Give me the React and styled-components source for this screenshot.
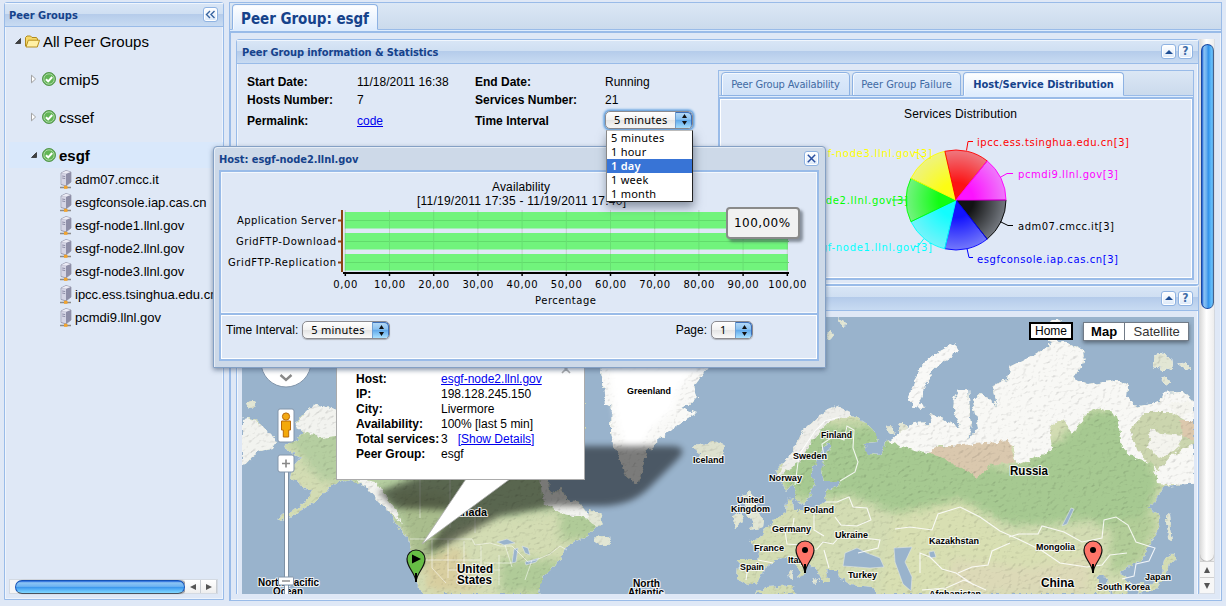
import React from "react";
import styled, { createGlobalStyle, css } from "styled-components";

const Global = createGlobalStyle`
  *, *::before, *::after { box-sizing: border-box; }
  body { margin: 0; background: #dfe8f6; color: #000; font: 12px/15px "Liberation Sans", Arial, sans-serif; overflow: hidden; }
`;
const line = "#99bbe8";
const tahoma = '"DejaVu Sans Condensed", "DejaVu Sans", sans-serif';
const lucida = '"Noto Sans", "Open Sans", sans-serif';

const Page = styled.div`
  position: relative; width: 1226px; height: 606px; padding: 2px 5px 5px 4px;
  display: flex; gap: 5px; align-items: flex-start; overflow: hidden;
`;
const headerFill = css`
  background: linear-gradient(#d9e6f6 0, #cfdff2 46%, #b4cbea 47%, #c8dbf2 100%);
`;
const Sidebar = styled.aside`
  width: 220px; height: 598px; border: 1px solid ${line}; box-shadow: inset 0 0 0 1px #eef4fc;
  display: flex; flex-direction: column; flex: none; border-radius: 3px 3px 0 0;
`;
const Header = styled.header`
  ${headerFill}
  height: ${(p) => p.$h || 24}px; flex: none; display: flex; align-items: center; gap: 2px;
  padding: 0 ${(p) => p.$right ?? 5}px 0 ${(p) => p.$left ?? 5}px;
  border-bottom: 1px solid ${line}; box-shadow: inset 0 1px #f0f6fd;
`;
const Title = styled.h2`
  margin: 0 auto 0 0; padding-top: 2px; font: bold 11px/14px ${tahoma}; color: #15428b; letter-spacing: ${(p) => p.$ls || 0}px; white-space: nowrap;
`;
const Tool = styled.button`
  width: 15px; height: 15px; padding: 0; border: 1px solid #8fb3e2; border-radius: 3px;
  background: linear-gradient(#fff, #dce9f9); display: grid; place-items: center;
  font: bold 12px/13px ${tahoma}; color: #3d6ba6; box-shadow: inset 0 0 0 1px #fff;
`;
const Tree = styled.div` flex: 1; padding-top: 1px; overflow: hidden; `;
const Node = styled.div`
  height: ${(p) => p.$h || 38}px; display: flex; align-items: center; padding-left: ${(p) => p.$indent}px;
  font-size: ${(p) => p.$size || 15}px; font-weight: ${(p) => (p.$bold ? 700 : 400)}; white-space: nowrap;
  margin: 0 0 0 4px; background: ${(p) => (p.$on ? "#d9e8fb" : "none")};
  svg { flex: none; }
`;
const Gap = styled.span` width: ${(p) => p.$w}px; flex: none; `;
const Rise = styled.div` height: ${(p) => p.$h}px; `;
const HScroll = styled.div`
  height: 15px; margin: 0 5px 5px 4px; display: flex; border: 1px solid #d4dae2; background: #f4f5f7; flex: none;
`;
const HThumb = styled.div`
  width: 170px; height: 14px; margin-left: 5px; border-radius: 7px; border: 1px solid #1553b8; border-bottom-color: #49525e;
  background: linear-gradient(#1d60d8 0, #8cc4f4 15%, #6db3f2 45%, #3b96ec 52%, #67c1fb 82%, #7fd7ff 100%);
  box-shadow: 2px 0 1px #999;
`;
const ScrollArrow = styled.div`
  width: 16px; display: grid; place-items: center; border-right: 1px solid #c8ccd2; background: linear-gradient(#fff, #eee);
`;

const Main = styled.main`
  width: 993px; height: 599px; border: 1px solid ${line}; box-shadow: inset 0 0 0 1px #eef4fc; display: flex; flex-direction: column; flex: none;
`;
const TabStrip = styled.div`
  height: ${(p) => p.$h}px; flex: none; padding: 1px 2px 0; display: flex; gap: 2px;
  background: linear-gradient(#dbe7f5, #cbdaec); border-bottom: 1px solid ${line};
`;
const TabBand = styled.div` height: 3px; flex: none; background: #deecfd; border-bottom: 2px solid ${line}; `;
const Tab = styled.div`
  width: ${(p) => p.$w}px; height: calc(100% + 1px); border: 1px solid #8db2e3; border-radius: 4px 4px 0 0; display: flex; align-items: center;
  justify-content: center; white-space: nowrap; color: ${(p) => (p.$on ? "#15428b" : "#416aa3")};
  border-bottom-color: ${(p) => (p.$on ? "#deecfd" : "#8db2e3")};
  background: ${(p) => (p.$on ? "linear-gradient(#fff, #deecfd)" : "linear-gradient(#deebfb, #d0e1f7)")};
  box-shadow: inset 1px 1px #f5f9fe; padding-top: ${(p) => p.$pt || 0}px;
  font: ${(p) => (p.$on ? "bold" : "normal")} ${(p) => p.$size || 11}px/18px ${tahoma}; letter-spacing: ${(p) => p.$ls || 0}px;
`;
const Body = styled.div`
  flex: 1; min-height: 0; border-left: 1px solid ${line}; display: flex; padding: 6px 5px 4px 5px;
`;
const Column = styled.div` width: 963px; height: 555px; overflow: hidden; flex: none; `;
const Panel = styled.section`
  height: ${(p) => p.$h}px; border: 1px solid ${line}; box-shadow: inset 1px 0 #f2f7fd, inset -1px -1px #f2f7fd; border-radius: 3px 3px 0 0;
`;
const InfoBody = styled.div` display: flex; justify-content: space-between; padding: 6px 4px 0 10px; `;
const Facts = styled.div`
  display: grid; grid-template-columns: 110px 118px 130px 100px; grid-template-rows: 18px 18px 25px; align-items: center; margin-top: 3px;
  font-size: 12px; align-content: start;
`;
const B = styled.b` white-space: nowrap; `;
const Link = styled.a` color: #0000ee; text-decoration: underline; white-space: nowrap; `;
const Select = styled.span`
  width: ${(p) => p.$w}px; height: 18px; display: inline-flex; border: 1px solid #8b8b90; border-radius: 5px; overflow: hidden;
  background: linear-gradient(#fff, #f1f1f1 50%, #e4e4e4 51%, #fafafa); font: 11px/16px ${lucida}; letter-spacing: .25px;
  margin-top: ${(p) => (p.$focus ? -4 : 0)}px;
  box-shadow: ${(p) => (p.$focus ? "0 0 0 1px #76a9dd, 0 0 2px 2px #7fb2e6" : "0 1px 1px #aab0b8")};
`;
const SelectText = styled.span` flex: 1; padding-left: ${(p) => p.$pl || 8}px; white-space: nowrap; `;
const Stepper = styled.span`
  width: 17px; display: grid; place-items: center; border-left: 1px solid #6f9fd2; border-radius: 0 4px 4px 0;
  background: linear-gradient(#b9dcf7, #8bc2f1 45%, #62aaea 52%, #a9e1ff); box-shadow: inset -1px 1px #3e6fb9;
`;
const ChartBox = styled.div`
  width: 476px; height: 210px; border: 1px solid ${line}; display: flex; flex-direction: column;
`;
const ChartInner = styled.div` flex: 1; min-height: 0; overflow: hidden; border: 1px solid ${line}; border-top: 0; box-shadow: inset 0 0 0 1px #fff; `;
const VScroll = styled.div`
  width: 16px; height: 555px; display: flex; flex-direction: column; align-items: center; border: 1px solid #d8dde5; border-top: 0;
  background: linear-gradient(90deg, #dadada, #fff 45%, #ededed);
`;
const VThumb = styled.div`
  width: 13px; height: 265px; margin-top: 5px; border-radius: 7px; border: 1px solid #1747a2; border-right-color: #44618c; flex: none;
  background: linear-gradient(90deg, #1b59cf 0, #8cc4f4 18%, #5fa9ee 46%, #2f8fe8 55%, #60bcfa 85%, #5cabe8 100%);
`;
const VTrack = styled.div` flex: 1; width: 14px; border-radius: 0 0 8px 8px; box-shadow: 0 1px 1px #aaa; `;
const VArrow = styled.div` height: 16px; width: 14px; display: grid; place-items: center; border-top: 1px solid #d0d0d0; flex: none; background: #f7f7f7; `;
const MapArea = styled.div` position: relative; width: 952px; height: 277px; margin: 6px 0 0 5px; overflow: hidden; background: #99b3cc; > svg { display: block; } `;
const Popup = styled.div`
  position: absolute; left: 94px; top: -20px; width: 249px; height: 183px; background: #fff; border: 1px solid #ababab; padding: 74px 0 0 19px;
  display: grid; grid-template-columns: 85px 1fr; grid-auto-rows: 15px; align-content: start; font-size: 12px;
`;
const PopupClose = styled.svg` position: absolute; left: 224px; top: 68px; `;
const HomeBtn = styled.div`
  position: absolute; left: 787px; top: 5px; width: 44px; height: 18px; border: 2px solid #000; background: #fff; font-size: 12px; line-height: 14px; text-align: center;
`;
const TypeGroup = styled.div`
  position: absolute; left: 841px; top: 5px; width: 106px; height: 19px; display: flex; border: 1px solid #717b87; background: #fff; box-shadow: 0 2px 4px rgba(0,0,0,.4);
`;
const TypeBtn = styled.div`
  width: ${(p) => p.$w}px; text-align: center; font-size: 13px; line-height: 17px; font-weight: ${(p) => (p.$on ? 700 : 400)}; color: ${(p) => (p.$on ? "#000" : "#333")};
  & + & { border-left: 1px solid #717b87; }
`;
const Dialog = styled.section`
  position: absolute; left: 213px; top: 146px; width: 613px; height: 222px; padding: 0 6px 6px 5px; background: #cdd9e8; border: 1px solid #84a0c4;
  border-radius: 4px 4px 1px 1px; box-shadow: inset 1px 1px #e6edf6, 0 2px 5px rgba(70,90,120,.65); display: flex; flex-direction: column;
`;
const DialogHead = styled.header` height: 23px; flex: none; display: flex; align-items: center; padding: 0; `;
const DialogChart = styled.div` height: 144px; flex: none; border: 1px solid ${line}; border-width: 2px 2px 1px; box-shadow: inset 0 0 0 1px #f4f8fd; background: #dfe8f6; > svg { display: block; } `;
const DialogFoot = styled.footer`
  flex: 1; border: 1px solid ${line}; border-width: 1px 2px 2px; background: #dfe8f6; box-shadow: inset 0 0 0 1px #fff; display: flex; align-items: flex-start; padding: 6px 64px 0 5px;
`;
const FootLabel = styled.span` line-height: 18px; margin-right: ${(p) => p.$mr}px; `;
const Spacer = styled.span` flex: 1; `;
const Tip = styled.div`
  position: absolute; left: 726px; top: 207px; width: 74px; height: 32px; border: 2px solid #8a8a8a; border-radius: 4px; background: #f1f1f1;
  box-shadow: 3px 3px 3px rgba(60,70,80,.55); font: 12px/28px "DejaVu Sans", sans-serif; padding-left: 6px; letter-spacing: .45px;
`;
const Menu = styled.div`
  position: absolute; left: 606px; top: 130px; width: 87px; height: 72px; background: #fff; border: 1px solid #222; border-top-color: #bbb; border-left-color: #888;
  box-shadow: 1px 5px 9px rgba(50,60,80,.5); font: 11px/14px ${lucida}; letter-spacing: .25px;
`;
const Option = styled.div` height: 14px; padding-left: 4px; ${(p) => p.$on && css`background: #3874d6; color: #fff; font-weight: 600;`} `;

const Folder = () => (
  <svg width="15" height="13" viewBox="0 0 15 13"><path d="M.5 11V2.5L2 1h3.5L7 2.5h4.5L12.5 4v7z" fill="#f5d86a" stroke="#b08a1d" /><path d="M3.3 5.2h11.2L12.3 12H1z" fill="#fff0a5" stroke="#b8901e" /></svg>
);
const Check = () => (
  <svg width="14" height="14" viewBox="0 0 14 14"><circle cx="7" cy="7" r="6.5" fill="#55a64b" stroke="#57984f" /><circle cx="7" cy="7" r="5.2" fill="#62b556" stroke="#b6dcae" strokeWidth=".9" /><path d="M4 7.2l2.2 2.2L10.2 5" fill="none" stroke="#fff" strokeWidth="2" /></svg>
);
const Server = () => (
  <svg width="13" height="19" viewBox="0 0 13 19">
    <path d="M2 3L7 .5 12 2v10l-5 4-5-1.500z" fill="#a8a8bd" stroke="#838398" strokeWidth=".6" />
    <path d="M2.300 3.200L7 4v11.500L2.300 14z" fill="#d5d5e5" /><path d="M7 4l5-2v10l-5 3.500z" fill="#8e8ea7" /><path d="M2.500 3L7 .8 11.700 2 7 3.800z" fill="#ececf6" />
    <path d="M3.200 6l3 .6M3.200 8l3 .6" stroke="#7d7d99" strokeWidth=".8" />
    <path d="M1 17.500h11" stroke="#8b8b8b" strokeWidth="1.500" /><path d="M6.500 15.500v2" stroke="#d89028" strokeWidth="1.500" /><rect x="5" y="16" width="3.500" height="2.800" fill="#f2a42e" />
  </svg>
);
const Twisty = ({ open }) => (
  <svg width="8" height="10" viewBox="0 0 8 10">{open ? <path d="M6.500 2.500v5h-5z" fill="#404040" stroke="#222" strokeWidth=".7" /> : <path d="M1.500 1.200v7.600L5.600 5z" fill="#fff" stroke="#999" strokeWidth=".9" />}</svg>
);
const Tri = ({ d, fill = "#555" }) => <svg width="8" height="8" viewBox="0 0 8 8"><path d={d} fill={fill} /></svg>;
const UP = "M4 1L7 7H1z", DOWN = "M1 1h6L4 7z", LEFT = "M1 4l6-3v6z", RIGHT = "M1 1l6 3-6 3z";
const UpDown = () => <svg width="7" height="11" viewBox="0 0 7 11"><path d="M3.500 0L6 4H1zM1 7h5L3.500 11z" fill="#111" /></svg>;
const CollapseTool = () => <Tool><Tri d="M4 2l4 4H0z" fill="#1e4e94" /></Tool>;

function MacSelect({ w, text, focus, pl }) {
  return <Select $w={w} $focus={focus}><SelectText $pl={pl}>{text}</SelectText><Stepper><UpDown /></Stepper></Select>;
}

const slices = ["#000000", "#0000ff", "#00ffff", "#00ff00", "#ffff00", "#ff0000", "#ff00ff"];
const pieLabels = [
  ["ipcc.ess.tsinghua.edu.cn[3]", 977, 146, 152, "#f00", "start"],
  ["pcmdi9.llnl.gov[3]", 1018, 178, 100, "#f0f", "start"],
  ["adm07.cmcc.it[3]", 1018, 230, 96, "#000", "start"],
  ["esgfconsole.iap.cas.cn[3]", 977, 263, 141, "#00f", "start"],
  ["esgf-node3.llnl.gov[3]", 932, 157, 124, "#ff0", "end"],
  ["esgf-node2.llnl.gov[3]", 908, 204, 124, "#0f0", "end"],
  ["esgf-node1.llnl.gov[3]", 932, 251, 124, "#0ff", "end"],
];
const leaders = [
  ["M966.500 151l1.500-9h5", "#f00"], ["M1000 178l7-4h6", "#f0f"], ["M1000 222l8 4h5", "#000"], ["M967 249l2 9h4", "#00f"],
  ["M924 160l-6-7h-4", "#ff0"], ["M906 200.500h-14", "#0f0"], ["M924 239l-6 8h-4", "#0ff"],
];
function Pie() {
  const cx = 956, cy = 200.500, r = 50;
  return (
    <svg width="468" height="176" viewBox="720 99.500 468 176" fontFamily="DejaVu Sans, sans-serif" fontSize="10" display="block">
      <defs>{slices.map((c, i) => (
        <radialGradient key={c} id={`pie${i}`} gradientUnits="userSpaceOnUse" cx={cx} cy={cy} r={r}>
          <stop offset=".35" stopColor={c} stopOpacity=".92" /><stop offset="1" stopColor={c} stopOpacity=".48" />
        </radialGradient>
      ))}</defs>
      <text x="904" y="118.500" fontFamily="Liberation Sans, sans-serif" fontSize="12" textLength="113">Services Distribution</text>
      {slices.map((c, i) => {
        const a = (i * 2 * Math.PI) / 7, b = ((i + 1) * 2 * Math.PI) / 7;
        return <path key={c} d={`M${cx} ${cy}L${cx + r * Math.cos(a)} ${cy + r * Math.sin(a)}A${r} ${r} 0 0 1 ${cx + r * Math.cos(b)} ${cy + r * Math.sin(b)}Z`} fill={`url(#pie${i})`} stroke={c} strokeWidth=".9" />;
      })}
      {leaders.map(([d, c]) => <path key={c} d={d} stroke={c} fill="none" />)}
      {pieLabels.map(([t, x, y, w, c, anchor]) => <text key={t} x={x} y={y + 0.500} textLength={w} fill={c} textAnchor={anchor}>{t}</text>)}
    </svg>
  );
}

function BarChart() {
  const ticks = Array.from({ length: 11 }, (_, i) => 345.300 + i * 44.200);
  const bars = [["Application Server", 212, 99], ["GridFTP-Download", 233, 100], ["GridFTP-Replication", 254, 108]];
  return (
    <svg width="596" height="140" viewBox="221 172 596 140" fontFamily="DejaVu Sans, sans-serif" fontSize="10">
      <g fontFamily="Liberation Sans, sans-serif" fontSize="12">
        <text x="492" y="191" textLength="58">Availability</text>
        <text x="417" y="205" textLength="209">[11/19/2011 17:35 - 11/19/2011 17:40]</text>
      </g>
      {ticks.map((x) => <path key={x} d={`M${x} 210v62`} stroke="#cbcbd0" />)}
      {bars.map(([t, y, w]) => (
        <g key={t}>
          <rect x="345.300" y={y} width="442" height="16.500" fill="#71f47c" />
          <path d={`M345 ${y + 8.500}h444`} stroke="#62dc6c" /><path d={`M338 ${y + 8.500}h4`} stroke="#8b4513" strokeWidth="2" />
          <text x="336" y={y + 12} textAnchor="end" textLength={w}>{t}</text>
        </g>
      ))}
      {ticks.map((x) => [212, 233, 254].map((y) => <path key={`${x}${y}`} d={`M${x} ${y}v16.500`} stroke="#69df73" />))}
      <path d="M342 210v62" stroke="#8b4513" strokeWidth="2" />
      <path d="M343 273h446" stroke="#000" strokeWidth="2" />
      {ticks.map((x, i) => (
        <g key={x}><path d={`M${x} 273v3`} stroke="#000" strokeWidth="1.500" />
          <text x={x} y="288" textAnchor="middle" textLength={i === 0 ? 24 : i === 10 ? 38 : 31}>{`${i * 10},00`}</text></g>
      ))}
      <text x="535" y="304" textLength="61">Percentage</text>
    </svg>
  );
}

const land = {
  america: "M277 518L292 512 304 504 312 491 300 485 290 478 292 468 300 458 288 452 284 445 297 440 302 432 296 422 305 412 316 405 331 408 345 412V400H584V470L540 482 541 500 538 520 533 526 531 514 518 507 504 500 497 490 502 480H545L552 494 560 486 566 500 580 503 590 516 597 527 588 536 575 541 567 547 560 560 552 567 542 578 539 594H421L415 580 411 565 410 552 408 538 400 530 393 518 385 507 376 499 366 487 352 480 338 482 329 487 322 496 310 505 297 513 282 521Z",
  siberia: "M242 419L250 418 259 422 264 429 272 434 277 442 272 449 260 451 252 456 242 467Z",
  bits: "M246 404l4-3 6 2-3 4-5 1zM590 509l10 5 4 10-7 3-8-6zM594 540l8-6 9 7-5 5-10-2zM733 517l9-4 2 10-9 4zM742 496l10-5 3 8 4 10-4 2 10 9-1 7-14 3 3-8-4-6zM788 572l4-2 1 10-4-1zM812 578l7 1-4 4zM697 335l2-3zM826 334l5-4 3 5-4 5zM838 317l9 8-5 1zM898 425l5-3 4 5-5 6-4-3zM887 427l5-1 2 9-5-2zM1153 356l8-2 5 3 6 2 1 9-8 2-12-3zM1178 364l7-2 6 6-5 2zM1161 379l7-2 3 6-6 2zM1167 513l3 1 1 15 2 12-5-2zM1165 559l8-5 4 4-8 6-3 12-10 13-8 4-5-3 10-6 8-7zM1136 584l7-1 2 7-6 4zM1044 337l6-18h9l4 15-9 8z",
  greenland: "M600 366L603 382 605 404 612 407 611 430 613 444 620 457 624 474 637 484 643 467 646 452 661 439 674 427 698 413 680 408 698 398 694 386 709 366Z",
  iceland: "M693 448l4-4 6 2 6-2 6-3 7 4 2 8-3 6-9 4-9-2-7-3 5-3z",
  novaya: "M955 343L959 350 943 361 931 373 924 388 920 400 926 409 915 408 909 398 914 383 920 367 933 355 946 348Z",
  eurasia: "M778 478L775 472 790 455 797 443 803 430 817 417 828 410 838 406 850 412 867 425 878 435 877 442 863 443 868 454 880 455 885 443 900 433 913 424 933 423 930 413 950 422 962 430 953 410 954 400 958 390 968 390 970 410 972 423 968 440 978 428 972 400 980 393 988 398 997 407 992 387 1007 380 1010 367 1030 357 1047 347 1053 340 1065 342 1083 350 1085 362 1073 378 1087 385 1117 380 1128 385 1127 397 1135 407 1160 402 1163 393 1183 392 1194 403V485L1187 485 1163 487 1157 500 1147 508 1157 513 1161 522 1156 534 1144 557 1130 567 1120 572 1130 583 1128 594H1113L1107 585 1108 577 1100 575 1096 579 1107 587 1110 594H877L873 587 850 585 840 577 838 570 827 570 830 583 823 583 817 571 803 558 805 573 800 577 797 567 787 557 777 560 763 570 757 582 745 585 737 580 738 560 757 560 760 550 749 540 760 538 767 528 777 517 786 512 787 500 793 498 794 510 804 510 817 507 825 500 827 490 840 486 838 482 824 482 822 470 824 460 832 447 827 443 820 453 810 473 814 484 810 497 803 504 797 500 794 483 787 491Z",
  africa: "M754 594L767 587 793 585 796 594Z",
};
const water = "M845 553L857 548 867 553 880 558 884 567 870 568 857 567 843 566ZM894 548L912 547 905 562 912 577 911 591 903 584 895 562ZM1063 524l8-16 3 1-7 15-5 2zM929 552l5-1 2 6-6 1zM497 542l10-3 8 4-11 2zM514 549l4-1-2 14-4 1zM522 546l6 2 2 7-5-2zM525 562l14-4-3 4-10 3z";
const borders = [
  "M410 539h62l3 6 15-2 10 3 12 0 16 16 8-2 14-6 10-8 7 4M432 540v28l14 15M448 540v38M464 541v44M481 546v38M499 555v30M420 560h60M448 570h52M484 563h28M505 545l7 22M532 560l-7 20M420 480v38M450 478v50M475 485v48M372 480v-66",
  "M824 457l-2-13 12-8 10 4 3-14 7 4-1 18 5 14-3 10-15 9M795 485l4-30 16-24 10-10 15-4M825 502l12 0 12-5 4 10 14 1 4 12-14 6-16-1-6-8M785 531l2 13 13 1 3 6 14-2 6-7 10 2 8-9 14 2 25 3-2 8-20 5M740 566h8l-2 14M758 560l15 3M794 518l-2 14M814 512v18l10 6M824 550l5 18",
  "M895 529l15-2 22 3 6-16 22-7 20 10 20 14 18 8 23 11 19 13 27 4 15-2 8-10 17-2M1009 537l10-3 19 0 4-8 22 6 18 10 20-4 2-18 12-3 12 8 8 17 19 6-6 13-13 3-2 12-12 3M920 573v-20l10 4 12 12 14 4 18 12M958 573l14-6 16-2 4-14 18-8M922 590l24-2 18-8 22 10",
];
const labels = [
  ["Greenland", 627, 394, 44, 9.2], ["Iceland", 693, 463, 31, 9.2], ["Finland", 821, 438, 31, 9.2], ["Sweden", 793, 459, 34, 9.2], ["Norway", 769, 481, 33, 9.2],
  ["United", 737, 503, 27, 9.2], ["Kingdom", 731, 512, 39, 9.2], ["Poland", 804, 513, 30, 9.2], ["Germany", 772, 532, 39, 9.2], ["France", 754, 551, 30, 9.2], ["Ukraine", 835, 538, 33, 9.2],
  ["Italy", 788, 563, 18, 9.2], ["Spain", 740, 570, 24, 9.2], ["Turkey", 848, 578, 29, 9.2], ["Russia", 1010, 475, 38, 12], ["Kazakhstan", 929, 544, 50, 9.2], ["Mongolia", 1036, 550, 39, 9.2],
  ["China", 1041, 587, 33, 12], ["Japan", 1145, 580, 26, 9.2], ["South Korea", 1097, 590, 53, 9.2], ["Afghanistan", 929, 597, 52, 9.2], ["Canada", 448, 516, 39, 11],
  ["United", 457, 573, 36, 12], ["States", 457, 584, 35, 12], ["North", 633, 587, 27, 10], ["Atlantic", 628, 596, 36, 10], ["North Pacific", 258, 586, 61, 10], ["Ocean", 273, 595, 30, 10],
];
const Marker = ({ x, y, color, play }) => (
  <g transform={`translate(${x} ${y})`}>
    <path d="M0 32c-1-10-9-14-9-23a9 9 0 1 1 18 0c0 9-8 13-9 23z" fill={color} stroke="#111" strokeWidth="1.200" /><path d="M0 23v9" stroke="#000" strokeWidth="2" />
    {play ? <path d="M-4 4.500v9L5 9z" /> : <circle cy="9" r="3" />}
  </g>
);
const all = Object.values(land).join(" ");
function WorldMap() {
  return (
    <svg width="952" height="277" viewBox="242 317 952 277">
      <defs>
        <filter id="rough" filterUnits="userSpaceOnUse" x="232" y="307" width="972" height="297" colorInterpolationFilters="sRGB">
          <feTurbulence type="fractalNoise" baseFrequency=".16" numOctaves="3" seed="4" result="n" />
          <feDisplacementMap in="SourceGraphic" in2="n" scale="7" xChannelSelector="R" yChannelSelector="G" result="land" />
          <feTurbulence type="fractalNoise" baseFrequency=".2 .26" numOctaves="3" seed="8" result="hills" />
          <feDiffuseLighting in="hills" surfaceScale=".55" diffuseConstant="1.180" lightingColor="#fff" result="shade"><feDistantLight azimuth="225" elevation="60" /></feDiffuseLighting>
          <feBlend in="land" in2="shade" mode="multiply" result="mixed" />
          <feComposite in="mixed" in2="land" operator="in" />
        </filter>
        <filter id="soft" x="-20%" y="-20%" width="140%" height="140%"><feGaussianBlur stdDeviation="5" /></filter>
        <filter id="shadow" x="-10%" y="-30%" width="120%" height="160%"><feGaussianBlur stdDeviation="3" /></filter>
        <clipPath id="landClip"><path d={all} /></clipPath>
      </defs>
      <rect x="242" y="317" width="952" height="277" fill="#99b3cc" />
      <g filter="url(#rough)">
        <path d={all} fill="#d3dcb3" />
        <g clipPath="url(#landClip)">
          <g filter="url(#soft)">
            <path d="M285 438L325 418 400 410H560V510L480 520 440 538 400 530 370 485 320 480Z" fill="#b5ceA0" />
            <path d="M395 490L450 495 440 580 412 560Z" fill="#a9bd8d" />
            <path d="M500 560h60v34h-60zM560 480h50v60h-50z" fill="#b0cb98" />
            <path d="M424 560l34-14 20 45h-50z" fill="#d8ce9f" />
            <path d="M810 425L870 425 905 440 950 450 1010 470 1060 440 1090 410 1120 410 1160 480 1150 510 1130 540 1090 520 1050 525 1010 525 960 500 900 515 850 495 800 500 780 480Z" fill="#a6c991" />
            <path d="M895 515L960 500 1010 540 1090 550 1110 594H880Z" fill="#d8dfb2" />
            <path d="M950 560l80 8 60-10v36h-140z" fill="#dcd9b7" />
            <path d="M1110 520l50-5-20 50-30 10z" fill="#b2cd98" />
          </g>
          <path d="M885 440L927 455 940 446 1013 447 1018 465 1053 450 1050 425 1062 420 1073 433 1087 413 1100 407 1117 415 1122 447 1133 457 1153 463 1157 484 1200 487V310H890Z" fill="#f8f8f5" />
          <path d="M928 452L940 447 1008 441 1016 462 990 466 977 478 962 468Z" fill="#dac8ae" />
          <path d="M1130 430L1145 412 1170 412 1194 425V445L1172 455 1158 470 1138 452Z" fill="#cbd5ae" />
          <path d="M1150 428l14 6 20 2-8 14-16 8-12-12zM1168 404l20-4 6 10-14 8z" fill="#f4f4ee" />
          <path d="M1180 420l14 0v20l-12-3z" fill="#dcc8ad" />
          <path d="M775 480L790 450 800 428 838 400 855 415 830 420 812 440 800 462 787 470Z" fill="#eeeeea" />
          <path d="M296 424L315 400 345 405V435L320 438 300 430ZM242 415l40 20-10 18-30 18zM355 478l20 4 20 26 6 14-18-15zM541 478h22l3 20 20 8 8 14-30-6-20-10z" fill="#f2f3ef" />
        </g>
        <path d={land.bits.split("M1165")[0] + "M1160 379l8-2"} fill="#e2e6d4" />
        <path d={land.greenland + land.novaya} fill="#f9f9f7" /><path d={land.iceland} fill="#dde1ce" />
      </g>
      <path d="M608 366H697L679 388 673 410 652 428 640 448 627 452 616 420Z" fill="#fff" filter="url(#shadow)" />
      <path d={water} fill="#99b3cc" stroke="#e1e8e8" strokeWidth=".6" />
      {borders.map((d, i) => <path key={i} d={d} fill="none" stroke="#fff" strokeWidth={i ? 1.100 : 0.800} opacity={i ? .85 : .65} />)}
      <path d="M378 492L500 446H670Q692 446 675 462L650 487Q632 506 600 506H555L500 516 440 548 426 551 455 510 395 508Z" fill="#000" opacity=".5" filter="url(#shadow)" />
      <g fontFamily="Liberation Sans, sans-serif" fontWeight="bold" stroke="#fff" strokeOpacity=".8" strokeWidth="2.200" strokeLinejoin="round" paintOrder="stroke">
        {labels.map(([t, x, y, w, s], i) => <text key={i} x={x} y={y} textLength={w} lengthAdjust="spacingAndGlyphs" fontSize={s}>{t}</text>)}
      </g>
      <path d="M466 479L422 544 510 479" fill="#fff" stroke="#ababab" strokeWidth=".8" />
      <Marker x={416} y={550} color="#67bd45" play /><Marker x={805} y={541} color="#fe7569" /><Marker x={1093} y={541} color="#fe7569" />
      <circle cx="286" cy="362" r="25" fill="#fff" stroke="#8295aa" /><path d="M280.500 375l5.500 5 5.500-5" fill="none" stroke="#888" strokeWidth="2.400" />
      <rect x="278" y="409" width="16" height="33" rx="2" fill="#fff" stroke="#8396ab" />
      <circle cx="286" cy="416.500" r="3.600" fill="#f3a915" stroke="#b86a0a" /><path d="M281.500 421h9v9h-1.800v7h-5.400v-7h-1.800z" fill="#f3a90b" stroke="#b86a0a" />
      <rect x="284.500" y="468" width="4" height="128" fill="#fff" stroke="#6c7f96" strokeWidth=".8" />
      <rect x="278" y="455" width="16" height="17" rx="2" fill="#fff" stroke="#8396ab" /><path d="M282 463.500h8M286 459.500v8" stroke="#888" strokeWidth="1.600" />
      <rect x="278.500" y="577" width="15" height="8" rx="1" fill="#fff" stroke="#8396ab" /><path d="M282 581h8" stroke="#888" strokeWidth="1.400" />
    </svg>
  );
}

const hosts = ["adm07.cmcc.it", "esgfconsole.iap.cas.cn", "esgf-node1.llnl.gov", "esgf-node2.llnl.gov", "esgf-node3.llnl.gov", "ipcc.ess.tsinghua.edu.cn", "pcmdi9.llnl.gov"];
const options = ["5 minutes", "1 hour", "1 day", "1 week", "1 month"];

export default function App() {
  return (
    <Page>
      <Global />
      <Sidebar>
        <Header $left={4}><Title>Peer Groups</Title><Tool><svg width="11" height="9" viewBox="0 0 11 9"><path d="M5 1L1.500 4.500 5 8M9.500 1L6 4.500 9.500 8" fill="none" stroke="#3764a0" strokeWidth="1.400" /></svg></Tool></Header>
        <Tree>
          <Node $indent={5} $h={26}><Twisty open /><Gap $w={3} /><Folder /><Gap $w={3} />All Peer Groups</Node>
          <Rise $h={6} />
          {["cmip5", "cssef"].map((n) => <Node key={n} $indent={21}><Twisty /><Gap $w={4} /><Check /><Gap $w={3} />{n}</Node>)}
          <Rise $h={6} />
          <Node $indent={21} $bold $on $h={26}><Twisty open /><Gap $w={4} /><Check /><Gap $w={3} />esgf</Node>
          {hosts.map((n) => <Node key={n} $indent={50} $h={23} $size={13}><Server /><Gap $w={3} />{n}</Node>)}
        </Tree>
        <HScroll><HThumb /><Spacer /><ScrollArrow><Tri d={LEFT} /></ScrollArrow><ScrollArrow><Tri d={RIGHT} /></ScrollArrow></HScroll>
      </Sidebar>

      <Main>
        <TabStrip $h={27}><Tab $w={146} $on $size={15} $ls={-0.05} $pt={4}>Peer Group: esgf</Tab></TabStrip>
        <TabBand />
        <Body>
          <Column>
            <Panel $h={246}>
              <Header><Title $ls={-0.1}>Peer Group information &amp; Statistics</Title><CollapseTool /><Tool>?</Tool></Header>
              <InfoBody>
                <Facts>
                  <B>Start Date:</B><span>11/18/2011 16:38</span><B>End Date:</B><span>Running</span>
                  <B>Hosts Number:</B><span>7</span><B>Services Number:</B><span>21</span>
                  <B>Permalink:</B><Link>code</Link><B>Time Interval</B><MacSelect w={88} text="5 minutes" focus />
                </Facts>
                <ChartBox>
                  <TabStrip $h={25}>
                    <Tab $w={129} $ls={-0.15} $pt={1}>Peer Group Availability</Tab><Tab $w={109} $pt={1}>Peer Group Failure</Tab><Tab $w={161} $on $pt={1}>Host/Service Distribution</Tab>
                  </TabStrip>
                  <TabBand />
                  <ChartInner><Pie /></ChartInner>
                </ChartBox>
              </InfoBody>
            </Panel>
            <Panel $h={330}>
              <Header $h={25}><Title /><CollapseTool /><Tool>?</Tool></Header>
              <MapArea>
                <WorldMap />
                <Popup>
                  <B>Host:</B><Link>esgf-node2.llnl.gov</Link>
                  <B>IP:</B><span>198.128.245.150</span>
                  <B>City:</B><span>Livermore</span>
                  <B>Availability:</B><span>100% [last 5 min]</span>
                  <B>Total services:</B><span>3 &nbsp; <Link>[Show Details]</Link></span>
                  <B>Peer Group:</B><span>esgf</span>
                  <PopupClose width="10" height="8" viewBox="0 0 10 8"><path d="M1 7l4-4 4 4M5 3L2 0M5 3l3-3" fill="none" stroke="#aaa" strokeWidth="1.600" /></PopupClose>
                </Popup>
                <HomeBtn>Home</HomeBtn>
                <TypeGroup><TypeBtn $w={41} $on>Map</TypeBtn><TypeBtn $w={65}>Satellite</TypeBtn></TypeGroup>
              </MapArea>
            </Panel>
          </Column>
          <VScroll><VThumb /><VTrack /><VArrow><Tri d={UP} /></VArrow><VArrow><Tri d={DOWN} /></VArrow></VScroll>
        </Body>
      </Main>

      <Dialog>
        <DialogHead><Title $ls={-0.05}>Host: esgf-node2.llnl.gov</Title><Tool><svg width="9" height="9" viewBox="0 0 9 9"><path d="M.8.8l7.400 7.400M8.200.8L.8 8.200" stroke="#2a4fa0" strokeWidth="1.500" /></svg></Tool></DialogHead>
        <DialogChart><BarChart /></DialogChart>
        <DialogFoot>
          <FootLabel $mr={4}>Time Interval:</FootLabel><MacSelect w={88} text="5 minutes" />
          <Spacer />
          <FootLabel $mr={4}>Page:</FootLabel><MacSelect w={42} text="1" />
        </DialogFoot>
      </Dialog>
      <Tip>100,00%</Tip>
      <Menu>{options.map((o) => <Option key={o} $on={o === "1 day"}>{o}</Option>)}</Menu>
    </Page>
  );
}
